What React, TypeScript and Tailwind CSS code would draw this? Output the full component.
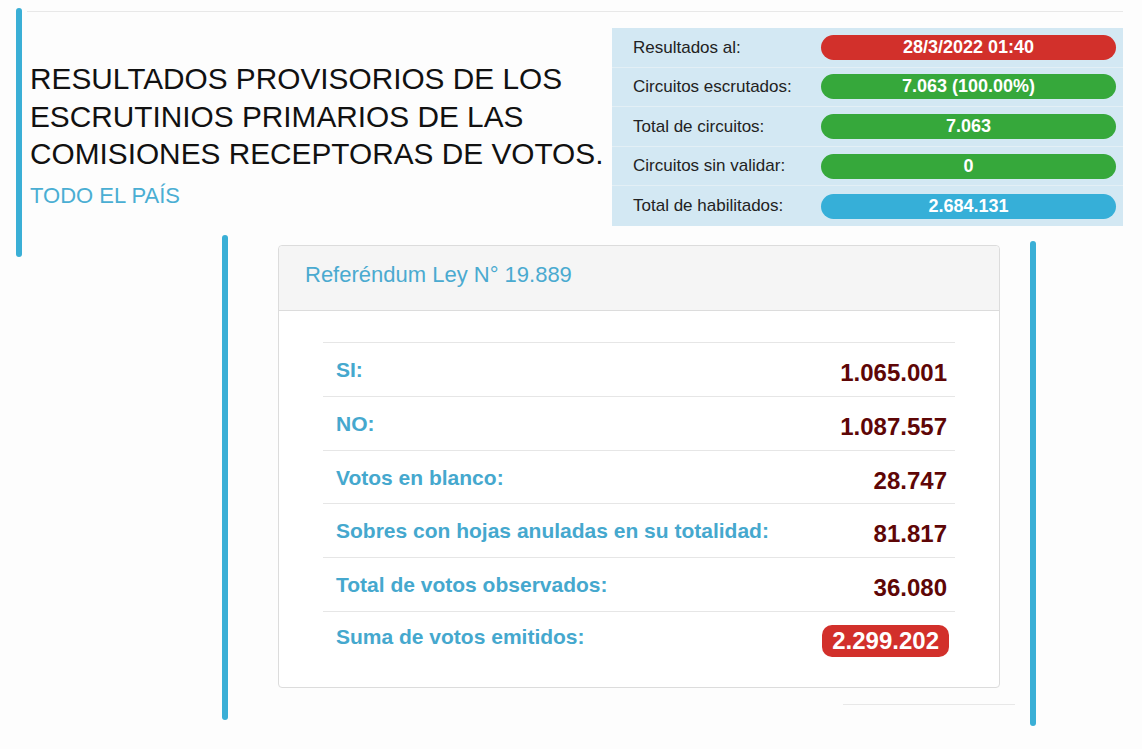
import React from 'react';

const resumen = [
  { label: 'Resultados al:', value: '28/3/2022 01:40', color: 'bg-[#d2302b]' },
  { label: 'Circuitos escrutados:', value: '7.063 (100.00%)', color: 'bg-[#36a83b]' },
  { label: 'Total de circuitos:', value: '7.063', color: 'bg-[#36a83b]' },
  { label: 'Circuitos sin validar:', value: '0', color: 'bg-[#36a83b]' },
  { label: 'Total de habilitados:', value: '2.684.131', color: 'bg-[#36afd8]' }
];

const votos = [
  { label: 'SI:', value: '1.065.001' },
  { label: 'NO:', value: '1.087.557' },
  { label: 'Votos en blanco:', value: '28.747' },
  { label: 'Sobres con hojas anuladas en su totalidad:', value: '81.817' },
  { label: 'Total de votos observados:', value: '36.080' }
];

export default function App() {
  return (
    <div className="min-h-screen bg-[#fdfdfd] pt-[8px] font-['Liberation_Sans',Arial,sans-serif]">
      {/* encabezado */}
      <div className="flex ml-[16px]">
        <div className="w-[6px] h-[249px] rounded-[3px] bg-[#3aafd6]" />
        <div className="ml-[5px] mt-[3px] w-[1096px] h-[60px] border-t border-[#e8e8e8] flex justify-between">
          <div className="pl-[3px] pt-[48px]">
            <h1 className="text-[29.8px] leading-[37.5px] text-[#111]">
              RESULTADOS PROVISORIOS DE LOS
              <br />
              ESCRUTINIOS PRIMARIOS DE LAS
              <br />
              COMISIONES RECEPTORAS DE VOTOS.
            </h1>
            <div className="mt-[7px] text-[22px] leading-[31px] text-[#4aaed3]">TODO EL PAÍS</div>
          </div>
          <div className="mt-[16px] w-[511px] h-fit bg-[#d3e8f3]">
            {resumen.map((r, i) => (
              <div
                key={r.label}
                className={`flex items-center h-[39.6px] ${i < resumen.length - 1 ? 'border-b border-[#e3eff5]' : ''}`}
              >
                <div className="w-[209px] pl-[21px] text-[17px] text-[#222]">{r.label}</div>
                <div
                  className={`w-[295px] h-[25px] rounded-full ${r.color} text-white font-bold text-[18px] leading-[25px] text-center`}
                >
                  {r.value}
                </div>
              </div>
            ))}
          </div>
        </div>
      </div>

      {/* resultados */}
      <div className="flex ml-[222px] mt-[-22px]">
        <div className="w-[6px] h-[485px] rounded-[3px] bg-[#3aafd6]" />
        <div className="ml-[50px] pt-[10px] w-[722px] shrink-0">
          <div className="w-[722px] border border-[#dcdcdc] rounded-[4px] bg-white">
            <div className="h-[65px] bg-[#f5f5f5] border-b border-[#dcdcdc] rounded-t-[4px] pl-[26px] pt-[13px]">
              <h2 className="text-[22px] leading-[31px] text-[#4aaad0]">Referéndum Ley N° 19.889</h2>
            </div>
            <div className="px-[44px] pt-[31px] pb-[22px]">
              {votos.map((v) => (
                <div key={v.label} className="flex justify-between items-start h-[53.8px] border-t border-[#e6e6e6]">
                  <div className="pl-[13px] pt-[13px] text-[21px] leading-[28px] font-bold text-[#45a8ce]">{v.label}</div>
                  <div className="pr-[8px] pt-[13px] text-[24px] leading-[34px] font-bold text-[#5e0606]">{v.value}</div>
                </div>
              ))}
              <div className="flex justify-between items-start h-[54px] border-t border-[#e6e6e6]">
                <div className="pl-[13px] pt-[11px] text-[21px] leading-[28px] font-bold text-[#45a8ce]">
                  Suma de votos emitidos:
                </div>
                <div className="pr-[6px] pt-[13px]">
                  <div className="h-[32px] px-[10px] rounded-[10px] bg-[#d2302b] text-white font-bold text-[24px] leading-[32px]">
                    2.299.202
                  </div>
                </div>
              </div>
            </div>
          </div>
          <div className="ml-[565px] mt-[16px] w-[172px] border-t border-[#e8e8e8]" />
        </div>
        <div className="ml-[30px] mt-[6px] w-[6px] h-[485px] rounded-[3px] bg-[#3aafd6]" />
      </div>
    </div>
  );
}
